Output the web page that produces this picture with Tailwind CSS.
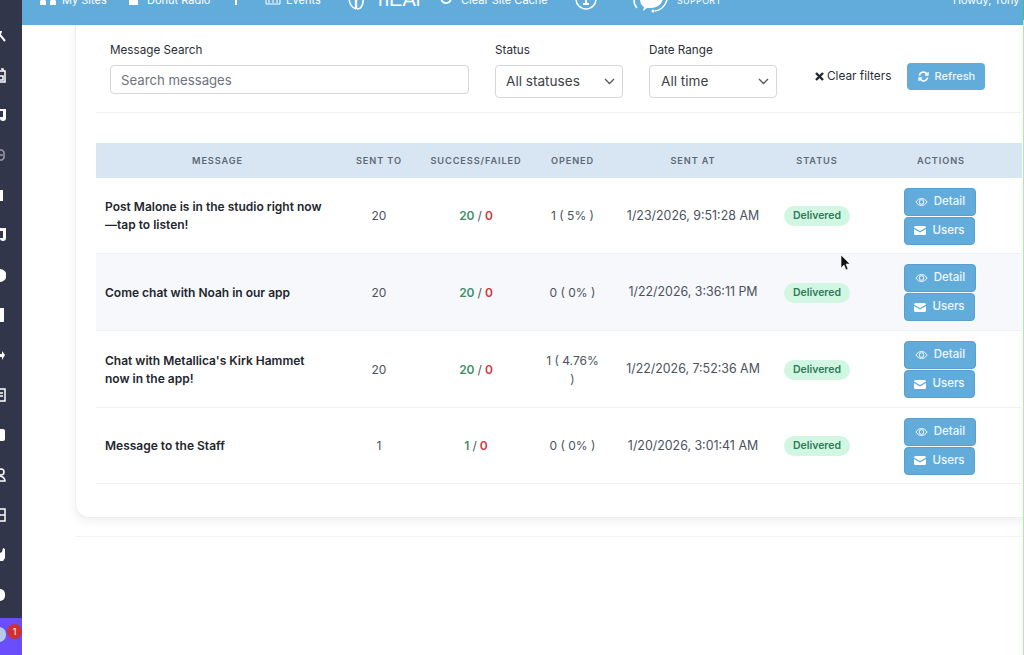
<!DOCTYPE html>
<html lang="en">

<head>
    <meta charset="UTF-8">
    <meta name="viewport" content="width=device-width, initial-scale=1.0">
    <title>Push Messages</title>
    <script src="https://cdn.jsdelivr.net/npm/@tailwindcss/browser@4"></script>
</head>

<body class="font-['Inter',sans-serif] text-[#23272f] bg-white overflow-hidden">
    <div class="flex h-[655px] w-[1024px] overflow-hidden relative">
        <!-- Admin sidebar, icons cut off by the left edge -->
        <div class="w-[22px] shrink-0 bg-[#32364a] flex flex-col relative">
            <div class="flex-1 flex flex-col pt-[15px] overflow-hidden">
                <div class="h-[40px] flex items-center"><svg width="6" height="13" viewBox="0 0 6 13" fill="none" stroke="#fff" stroke-width="2"><path d="M-3 6a4 4 0 0 0 4-4M0 6l5 6"/></svg></div>
                <div class="h-[40px] flex items-center"><svg width="6" height="15" viewBox="0 0 6 15" fill="none" stroke="#fff" stroke-width="1.500"><path d="M-1 3h6v11H-1M1 1h2v2M0 8h3v4H0"/></svg></div>
                <div class="h-[40px] flex items-center"><svg width="6" height="12" viewBox="0 0 6 12" fill="#fff"><path d="M0 0h6v9a3 3 0 0 1-6 0v-1h3V2H0z"/></svg></div>
                <div class="h-[40px] flex items-center"><svg width="5" height="12" viewBox="0 0 5 12" fill="none" stroke="#9a9ca8" stroke-width="1.500"><path d="M-1 1h3l2 2v6l-2 2h-3M0 6h3"/></svg></div>
                <div class="h-[40px] flex items-center"><div class="w-[3px] h-[11px] bg-white"></div></div>
                <div class="h-[40px] flex items-center"><svg width="6" height="14" viewBox="0 0 6 14" fill="#fff"><path d="M0 0h6v10a3 3 0 0 1-6 0h3V3H0z"/></svg></div>
                <div class="h-[40px] flex items-center"><svg width="6" height="13" viewBox="0 0 6 13" fill="#fff"><path d="M0 0a6.500 6.500 0 0 1 0 13z"/></svg></div>
                <div class="h-[40px] flex items-center"><div class="w-[4px] h-[14px] bg-white"></div></div>
                <div class="h-[40px] flex items-center"><svg width="5" height="9" viewBox="0 0 5 9" fill="#fff"><path d="M0 3h2V0l3 4-3 5V6H0z"/></svg></div>
                <div class="h-[40px] flex items-center"><svg width="6" height="14" viewBox="0 0 6 14" fill="none" stroke="#fff" stroke-width="1.500"><path d="M-1 1h6v12h-6M0 5h3M0 8h3"/></svg></div>
                <div class="h-[40px] flex items-center"><div class="w-[5px] h-[12px] bg-white rounded-r-[2px]"></div></div>
                <div class="h-[40px] flex items-center"><svg width="6" height="14" viewBox="0 0 6 14" fill="none" stroke="#fff" stroke-width="1.500"><circle cx="1" cy="4" r="3"/><path d="M-1 8c3 0 6 2 6 5h-6"/></svg></div>
                <div class="h-[40px] flex items-center"><svg width="6" height="14" viewBox="0 0 6 14" fill="none" stroke="#fff" stroke-width="1.500"><path d="M-1 1h6v12h-6M-1 7h6"/></svg></div>
                <div class="h-[40px] flex items-center"><svg width="5" height="14" viewBox="0 0 5 14" fill="#fff"><path d="M0 5l2-1 1-4 2 1v9l-2 3H0z"/></svg></div>
                <div class="h-[40px] flex items-center"><div class="w-[5px] h-[12px] bg-white rounded-r-full"></div></div>
            </div>
            <div class="h-[37px] shrink-0 bg-[#6a4dfb] relative">
                <div class="absolute left-[-8px] top-[9px] w-[14px] h-[15px] rounded-full bg-[#b8cbe6]"></div>
                <div class="absolute left-[7px] top-[6px] w-[15px] h-[15px] rounded-full bg-[#d22f2f] text-white text-[9px] flex items-center justify-center">1</div>
            </div>
        </div>

        <div class="flex-1 min-w-0 flex flex-col">
            <!-- Top bar, its content scrolled partly out of the window -->
            <div class="h-[25px] shrink-0 bg-[#62acdb] overflow-hidden text-white text-[11px] leading-[11px] flex items-start pl-[18px] whitespace-nowrap">
                <svg class="shrink-0 -mt-[3px]" width="17" height="8" viewBox="0 0 17 8" fill="#fff"><path d="M0 4l3-3 3 3v4H0zM10 4l3-3 3 3v4h-6z"/></svg>
                <span class="shrink-0 ml-[5px] w-[45px] -mt-[5px]">My Sites</span>
                <svg class="shrink-0 ml-[20px] -mt-[3px]" width="13" height="8" viewBox="0 0 13 8" fill="#fff"><path d="M0 1h13v2H11v5H2V3H0z"/></svg>
                <span class="shrink-0 ml-[7px] w-[64px] -mt-[5px]">Donut Radio</span>
                <div class="shrink-0 ml-[24px] w-[2px] h-[8px] -mt-[3px] bg-white"></div>
                <svg class="shrink-0 ml-[28px] -mt-[3px]" width="16" height="8" viewBox="0 0 16 8" fill="none" stroke="#fff"><path d="M1 0v7h14V0M4 2v4M8 2v4M12 2v4"/></svg>
                <span class="shrink-0 ml-[5px] w-[35px] -mt-[5px]">Events</span>
                <svg class="shrink-0 ml-[27px] -mt-[10px]" width="30" height="20" viewBox="0 0 30 20" fill="none" stroke="#fff" stroke-width="1.600"><path d="M3 2C-1 9 2 17 8 19"/><path d="M8 0v19" stroke-width="2.400"/><path d="M9 19c5 0 7-6 6-14"/></svg>
                <span class="shrink-0 w-[32px] -mt-[11px] font-['Liberation_Sans',sans-serif] text-[20px] leading-[20px]">nEAr</span>
                <svg class="shrink-0 ml-[30px] -mt-[10px]" width="12" height="15" viewBox="0 0 12 15" fill="none" stroke="#fff" stroke-width="1.800"><path d="M10 5a5 5 0 1 0 1 4"/></svg>
                <span class="shrink-0 ml-[9px] w-[87px] -mt-[5px]">Clear Site Cache</span>
                <svg class="shrink-0 ml-[27px] -mt-[12px]" width="22" height="22" viewBox="0 0 22 22" fill="none" stroke="#fff" stroke-width="1.500"><circle cx="11" cy="11" r="10"/><path d="M11 8v8M8 16h6" stroke-width="2"/></svg>
                <svg class="shrink-0 ml-[35px] -mt-[10px]" width="40" height="26" viewBox="0 0 40 26" fill="none" stroke="#fff" stroke-width="1.500"><path d="M2 10c0 4 1 6 3 8"/><path d="M36 2c0 12-6 18-13 19"/><path d="M9 4h20a3 3 0 0 1 2 3c0 7-6 11-12 11l-4 0-4 3 1-4c-4-2-5-8-3-13z" fill="#fff" stroke="none"/><circle cx="21" cy="21" r="1.500" fill="#fff" stroke="none"/></svg>
                <span class="shrink-0 ml-[5px] w-[43px] -mt-[5px] text-[9px] tracking-[0.3px]">SUPPORT</span>
                <span class="shrink-0 ml-[233px] -mt-[5px] text-[10.800px]">Howdy, Tony</span>
            </div>

            <div class="flex-1 pl-[53px] relative">
                <!-- Card -->
                <div class="w-[1100px] h-[493px] border-l border-b border-[#eceef3] rounded-bl-[14px] shadow-[0_3px_8px_rgba(30,40,70,0.08)] pl-[20px] bg-white">
                    <!-- Filters -->
                    <div class="h-[88px] w-[926px] border-b border-[#f0f1f5] flex items-start pl-[14px] pt-[18px]">
                        <div class="w-[385px]">
                            <label class="block text-[11.700px] leading-[15px] text-[#2b2f38]">Message Search</label>
                            <input class="mt-[7px] block w-[359px] h-[29px] border border-[#d4d6de] rounded-[4px] px-[10px] text-[13.200px] placeholder:text-[#6d7280]" placeholder="Search messages">
                        </div>
                        <div class="w-[154px]">
                            <label class="block text-[11.700px] leading-[15px] text-[#2b2f38]">Status</label>
                            <div class="mt-[7px] w-[128px] h-[33px] border border-[#d4d6de] rounded-[4px] pl-[10px] pr-[7px] text-[13.600px] text-[#3c4048] flex items-center justify-between">
                                All statuses
                                <svg width="11" height="7" viewBox="0 0 11 7" fill="none" stroke="#555" stroke-width="1.300"><path d="M1 1l4.500 4.500L10 1"/></svg>
                            </div>
                        </div>
                        <div class="w-[166px]">
                            <label class="block text-[11.700px] leading-[15px] text-[#2b2f38]">Date Range</label>
                            <div class="mt-[7px] w-[128px] h-[33px] border border-[#d4d6de] rounded-[4px] pl-[11px] pr-[7px] text-[13.600px] text-[#3c4048] flex items-center justify-between">
                                All time
                                <svg width="11" height="7" viewBox="0 0 11 7" fill="none" stroke="#555" stroke-width="1.300"><path d="M1 1l4.500 4.500L10 1"/></svg>
                            </div>
                        </div>
                        <div class="flex items-center gap-[16px] mt-[20px]">
                            <div class="flex items-center gap-[3px] text-[11.800px] text-[#2b2f38]">
                                <svg width="9" height="9" viewBox="0 0 9 9" fill="none" stroke="#23272f" stroke-width="2.400"><path d="M1 1l7 7M8 1L1 8"/></svg>
                                Clear filters
                            </div>
                            <button class="w-[78px] h-[27px] bg-[#62acdb] rounded-[4px] text-white/90 text-[11px] font-medium flex items-center justify-center gap-[6px]">
                                <svg width="11" height="11" viewBox="0 0 12 12" fill="none" stroke="#fff" stroke-width="1.700"><path d="M1.500 5a4.500 4.500 0 0 1 8-2l1 1M10.500 7a4.500 4.500 0 0 1-8 2l-1-1"/><path d="M11 1v3.500H7.500M1 11V7.500h3.500" stroke-width="1.300"/></svg>
                                Refresh
                            </button>
                        </div>
                    </div>

                    <!-- Table -->
                    <table class="mt-[30px] w-[926px] table-fixed border-collapse text-[12px]">
                        <colgroup>
                            <col class="w-[243px]">
                            <col class="w-[80px]">
                            <col class="w-[114px]">
                            <col class="w-[79px]">
                            <col class="w-[162px]">
                            <col class="w-[86px]">
                            <col class="w-[162px]">
                        </colgroup>
                        <thead>
                            <tr class="h-[35px] bg-[#d7e6f2] text-[9.200px] font-semibold tracking-[0.9px] text-[#5f6875]">
                                <th class="font-semibold">MESSAGE</th>
                                <th class="font-semibold">SENT TO</th>
                                <th class="font-semibold">SUCCESS/FAILED</th>
                                <th class="font-semibold">OPENED</th>
                                <th class="font-semibold">SENT AT</th>
                                <th class="font-semibold">STATUS</th>
                                <th class="font-semibold">ACTIONS</th>
                            </tr>
                        </thead>
                        <tbody class="text-center text-[#4b5260] [&>tr>td]:pt-[2px]">
                            <tr class="h-[75px] border-b border-[#f0f1f5]">
                                <td class="text-left pl-[9px] pr-[10px] font-semibold text-[#23272f] leading-[18px]">Post Malone is in the studio right now<br>—tap to listen!</td>
                                <td>20</td>
                                <td class="font-semibold"><span class="text-[#3f8f68]">20</span> <span class="font-normal">/</span> <span class="text-[#d0393f]">0</span></td>
                                <td>1 ( 5% )</td>
                                <td class="whitespace-nowrap text-[12.400px]">1/23/2026, 9:51:28 AM</td>
                                <td><span class="inline-block h-[20px] leading-[20px] px-[9px] rounded-full bg-[#d1f7e3] text-[#2f7a58] text-[10.500px] font-semibold">Delivered</span></td>
                                <td class="pl-[44px]">
                                    <div class="flex flex-col gap-[1px] items-start">
                                        <button class="w-[72px] h-[28px] bg-[#62acdb] border border-[#5a9fce] rounded-[4px] text-white/90 text-[11.500px] font-medium flex items-center justify-center gap-[6px]">
                                            <svg width="13" height="10" viewBox="0 0 14 10" fill="none" stroke="#fff" stroke-width="1"><path d="M1 5c3-5 9-5 12 0-3 5-9 5-12 0z"/><circle cx="7" cy="5" r="2.500"/></svg>
                                            Detail
                                        </button>
                                        <button class="w-[71px] h-[28px] bg-[#62acdb] border border-[#5a9fce] rounded-[4px] text-white/90 text-[11.500px] font-medium flex items-center justify-center gap-[6px]">
                                            <svg width="12" height="9" viewBox="0 0 12 9" fill="#fff"><path d="M0 1.500A1.500 1.500 0 0 1 1.500 0h9A1.500 1.500 0 0 1 12 1.500L6 5zM0 3l6 3.500L12 3v4.500A1.500 1.500 0 0 1 10.500 9h-9A1.500 1.500 0 0 1 0 7.500z"/></svg>
                                            Users
                                        </button>
                                    </div>
                                </td>
                            </tr>
                            <tr class="h-[77px] border-b border-[#f0f1f5] bg-[#f7f8fb]">
                                <td class="text-left pl-[9px] pr-[10px] font-semibold text-[#23272f] leading-[18px]">Come chat with Noah in our app</td>
                                <td>20</td>
                                <td class="font-semibold"><span class="text-[#3f8f68]">20</span> <span class="font-normal">/</span> <span class="text-[#d0393f]">0</span></td>
                                <td>0 ( 0% )</td>
                                <td class="whitespace-nowrap text-[12.400px]">1/22/2026, 3:36:11 PM</td>
                                <td><span class="inline-block h-[20px] leading-[20px] px-[9px] rounded-full bg-[#d1f7e3] text-[#2f7a58] text-[10.500px] font-semibold">Delivered</span></td>
                                <td class="pl-[44px]">
                                    <div class="flex flex-col gap-[1px] items-start">
                                        <button class="w-[72px] h-[28px] bg-[#62acdb] border border-[#5a9fce] rounded-[4px] text-white/90 text-[11.500px] font-medium flex items-center justify-center gap-[6px]">
                                            <svg width="13" height="10" viewBox="0 0 14 10" fill="none" stroke="#fff" stroke-width="1"><path d="M1 5c3-5 9-5 12 0-3 5-9 5-12 0z"/><circle cx="7" cy="5" r="2.500"/></svg>
                                            Detail
                                        </button>
                                        <button class="w-[71px] h-[28px] bg-[#62acdb] border border-[#5a9fce] rounded-[4px] text-white/90 text-[11.500px] font-medium flex items-center justify-center gap-[6px]">
                                            <svg width="12" height="9" viewBox="0 0 12 9" fill="#fff"><path d="M0 1.500A1.500 1.500 0 0 1 1.500 0h9A1.500 1.500 0 0 1 12 1.500L6 5zM0 3l6 3.500L12 3v4.500A1.500 1.500 0 0 1 10.500 9h-9A1.500 1.500 0 0 1 0 7.500z"/></svg>
                                            Users
                                        </button>
                                    </div>
                                </td>
                            </tr>
                            <tr class="h-[77px] border-b border-[#f0f1f5]">
                                <td class="text-left pl-[9px] pr-[10px] font-semibold text-[#23272f] leading-[18px]">Chat with Metallica's Kirk Hammet<br>now in the app!</td>
                                <td>20</td>
                                <td class="font-semibold"><span class="text-[#3f8f68]">20</span> <span class="font-normal">/</span> <span class="text-[#d0393f]">0</span></td>
                                <td class="leading-[18px]">1 ( 4.76%<br>)</td>
                                <td class="whitespace-nowrap text-[12.400px]">1/22/2026, 7:52:36 AM</td>
                                <td><span class="inline-block h-[20px] leading-[20px] px-[9px] rounded-full bg-[#d1f7e3] text-[#2f7a58] text-[10.500px] font-semibold">Delivered</span></td>
                                <td class="pl-[44px]">
                                    <div class="flex flex-col gap-[1px] items-start">
                                        <button class="w-[72px] h-[28px] bg-[#62acdb] border border-[#5a9fce] rounded-[4px] text-white/90 text-[11.500px] font-medium flex items-center justify-center gap-[6px]">
                                            <svg width="13" height="10" viewBox="0 0 14 10" fill="none" stroke="#fff" stroke-width="1"><path d="M1 5c3-5 9-5 12 0-3 5-9 5-12 0z"/><circle cx="7" cy="5" r="2.500"/></svg>
                                            Detail
                                        </button>
                                        <button class="w-[71px] h-[28px] bg-[#62acdb] border border-[#5a9fce] rounded-[4px] text-white/90 text-[11.500px] font-medium flex items-center justify-center gap-[6px]">
                                            <svg width="12" height="9" viewBox="0 0 12 9" fill="#fff"><path d="M0 1.500A1.500 1.500 0 0 1 1.500 0h9A1.500 1.500 0 0 1 12 1.500L6 5zM0 3l6 3.500L12 3v4.500A1.500 1.500 0 0 1 10.500 9h-9A1.500 1.500 0 0 1 0 7.500z"/></svg>
                                            Users
                                        </button>
                                    </div>
                                </td>
                            </tr>
                            <tr class="h-[76px] border-b border-[#f0f1f5]">
                                <td class="text-left pl-[9px] pr-[10px] font-semibold text-[#23272f] leading-[18px]">Message to the Staff</td>
                                <td>1</td>
                                <td class="font-semibold"><span class="text-[#3f8f68]">1</span> <span class="font-normal">/</span> <span class="text-[#d0393f]">0</span></td>
                                <td>0 ( 0% )</td>
                                <td class="whitespace-nowrap text-[12.400px]">1/20/2026, 3:01:41 AM</td>
                                <td><span class="inline-block h-[20px] leading-[20px] px-[9px] rounded-full bg-[#d1f7e3] text-[#2f7a58] text-[10.500px] font-semibold">Delivered</span></td>
                                <td class="pl-[44px]">
                                    <div class="flex flex-col gap-[1px] items-start">
                                        <button class="w-[72px] h-[28px] bg-[#62acdb] border border-[#5a9fce] rounded-[4px] text-white/90 text-[11.500px] font-medium flex items-center justify-center gap-[6px]">
                                            <svg width="13" height="10" viewBox="0 0 14 10" fill="none" stroke="#fff" stroke-width="1"><path d="M1 5c3-5 9-5 12 0-3 5-9 5-12 0z"/><circle cx="7" cy="5" r="2.500"/></svg>
                                            Detail
                                        </button>
                                        <button class="w-[71px] h-[28px] bg-[#62acdb] border border-[#5a9fce] rounded-[4px] text-white/90 text-[11.500px] font-medium flex items-center justify-center gap-[6px]">
                                            <svg width="12" height="9" viewBox="0 0 12 9" fill="#fff"><path d="M0 1.500A1.500 1.500 0 0 1 1.500 0h9A1.500 1.500 0 0 1 12 1.500L6 5zM0 3l6 3.500L12 3v4.500A1.500 1.500 0 0 1 10.500 9h-9A1.500 1.500 0 0 1 0 7.500z"/></svg>
                                            Users
                                        </button>
                                    </div>
                                </td>
                            </tr>
                        </tbody>
                    </table>
                </div>
                <!-- Faint rule under the card -->
                <div class="mt-[18px] h-px bg-[#f3f4f7]"></div>

                <!-- Mouse pointer in the screenshot -->
                <svg class="absolute left-[818px] top-[229px]" width="11" height="17" viewBox="0 0 11 17" fill="#111" stroke="#fff" stroke-width="0.600"><path d="M1 1v13l3-3 2 5 2-1-2-5h4z"/></svg>
            </div>
        </div>

        <!-- Thin green edge of the recording, over everything -->
        <div class="absolute right-0 top-0 bottom-0 w-px bg-[#a9eea3]">
            <div class="h-[20px] bg-[#3fc08a]"></div>
        </div>
    </div>
</body>

</html>
